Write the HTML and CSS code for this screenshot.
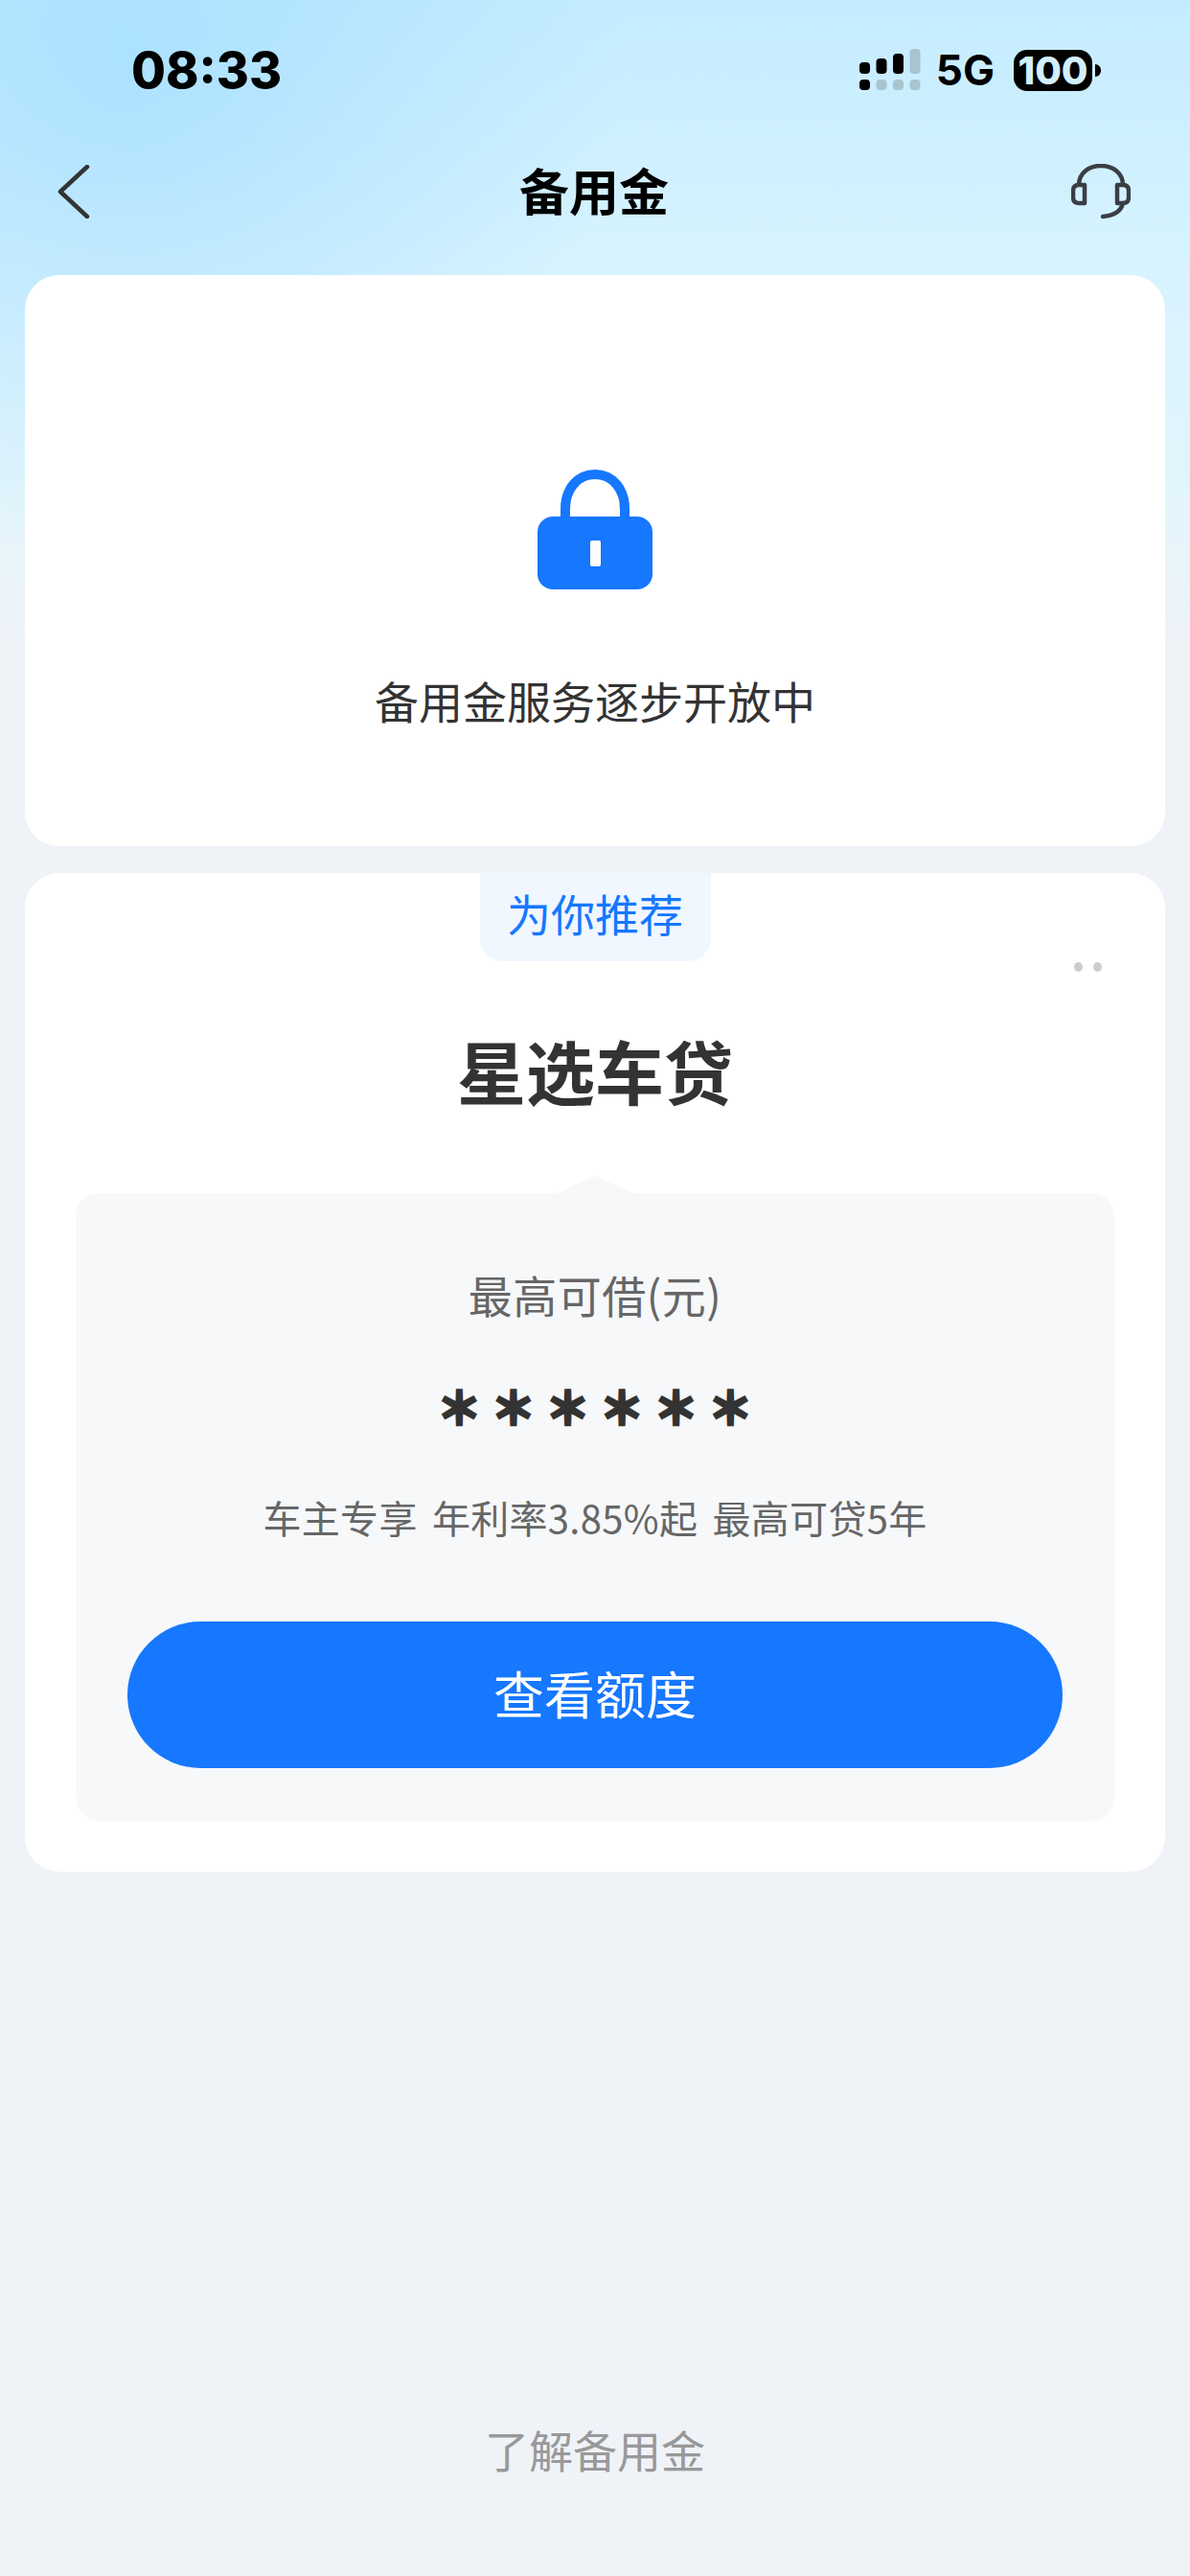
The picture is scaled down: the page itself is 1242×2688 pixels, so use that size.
FILE: index.html
```html
<!DOCTYPE html>
<html lang="zh-CN">

<head>
    <meta charset="UTF-8" />
    <meta name="viewport" content="width=device-width, initial-scale=1.0" />
    <title>备用金</title>
    <link rel="stylesheet" href="styles.css">
</head>

<body>
    <div class="status-bar">
        <span class="time">08:33</span>
        <div class="status-right">
            <svg class="signal" width="64" height="44" viewBox="0 0 64 44">
                <rect x="0" y="14" width="11" height="12" rx="4" fill="#000" />
                <rect x="17.5" y="10" width="11" height="16" rx="4" fill="#000" />
                <rect x="35" y="5" width="11" height="21" rx="4" fill="#000" />
                <rect x="52.5" y="0" width="11" height="26" rx="4" fill="#a9c3cf" />
                <rect x="0" y="32" width="11" height="11" rx="4" fill="#000" />
                <rect x="17.5" y="32" width="11" height="11" rx="4" fill="#a9c3cf" />
                <rect x="35" y="32" width="11" height="11" rx="4" fill="#a9c3cf" />
                <rect x="52.5" y="32" width="11" height="11" rx="4" fill="#a9c3cf" />
            </svg>
            <span class="network">5G</span>
            <div class="battery">
                <span class="battery-level">100</span>
                <span class="battery-nub"></span>
            </div>
        </div>
    </div>

    <div class="nav-bar">
        <div class="nav-side">
            <svg width="34" height="56" viewBox="0 0 34 56">
                <path d="M31 2 L3 28 L31 54" fill="none" stroke="#333" stroke-width="4.5" stroke-linecap="round" stroke-linejoin="round" />
            </svg>
        </div>
        <span class="nav-title">备用金</span>
        <div class="nav-side nav-side-right">
            <svg width="62" height="58" viewBox="0 0 62 58">
                <path d="M8 22 C8 10 18 2 31 2 C44 2 54 10 54 22" fill="none" stroke="#3a3f44" stroke-width="4.5" />
                <path d="M14 22 H8 Q2 22 2 28 V35 Q2 41 8 41 H14 Z" fill="none" stroke="#3a3f44" stroke-width="4.5" stroke-linejoin="round" />
                <path d="M48 22 H54 Q60 22 60 28 V35 Q60 41 54 41 H48 Z" fill="none" stroke="#3a3f44" stroke-width="4.5" stroke-linejoin="round" />
                <path d="M54 41 C52 50 44 54 33 55" fill="none" stroke="#3a3f44" stroke-width="4.5" stroke-linecap="round" />
            </svg>
        </div>
    </div>

    <div class="card card-lock">
        <svg class="lock" width="120" height="125" viewBox="0 0 120 125">
            <path d="M29 55 V41 C29 20 42 5 60 5 C78 5 91 20 91 41 V55" fill="none" stroke="#1677ff" stroke-width="10" />
            <rect x="0" y="49" width="120" height="76" rx="16" fill="#1677ff" />
            <rect x="55" y="74" width="11" height="27" rx="2" fill="#fff" />
        </svg>
        <p class="lock-text">备用金服务逐步开放中</p>
    </div>

    <div class="card card-loan">
        <div class="tag">为你推荐</div>
        <div class="dots"><i></i><i></i></div>
        <h1 class="loan-title">星选车贷</h1>
        <div class="panel">
            <p class="panel-label">最高可借(元)</p>
            <p class="panel-amount">＊＊＊＊＊＊</p>
            <p class="panel-desc">车主专享 年利率3.85%起 最高可贷5年</p>
            <button type="button" class="panel-button">查看额度</button>
        </div>
    </div>

    <div class="footer-link">了解备用金</div>
</body>

</html>
```

FILE: styles.css
```css
* {
    box-sizing: border-box;
}

html,
body {
    margin: 0;
    padding: 0;
}

body {
    width: 1242px;
    height: 2688px;
    display: flex;
    flex-direction: column;
    overflow: hidden;
    font-family: "Noto Sans CJK SC", "Liberation Sans", sans-serif;
    color: #333;
    background-color: #eff3f8;
    background-image:
        radial-gradient(circle at 130px 60px, rgba(160, 220, 255, 0.7), rgba(160, 220, 255, 0) 520px),
        linear-gradient(180deg, #c4ecff 0, #d8f3ff 280px, #e2f5fc 500px, #eff3f8 680px);
}

p,
h1 {
    margin: 0;
}

.status-bar {
    height: 146px;
    display: flex;
    align-items: center;
    justify-content: space-between;
    padding: 0 93px 0 137px;
    color: #000;
}

.time {
    font-family: Inter, "Liberation Sans", sans-serif;
    font-size: 52px;
    font-weight: 800;
}

.status-right {
    display: flex;
    align-items: center;
}

.signal {
    margin-right: 16px;
}

.network {
    font-family: Inter, "Liberation Sans", sans-serif;
    font-size: 44px;
    font-weight: 700;
    margin-right: 20px;
}

.battery {
    display: flex;
    align-items: center;
}

.battery-level {
    width: 82px;
    height: 43px;
    border-radius: 14px;
    background-color: #000;
    color: #d2efff;
    font-family: Inter, "Liberation Sans", sans-serif;
    font-size: 40px;
    font-weight: 800;
    line-height: 43px;
    text-align: center;
}

.battery-nub {
    width: 6px;
    height: 13px;
    margin-left: 3px;
    background-color: #000;
    border-radius: 0 7px 7px 0;
}

.nav-bar {
    height: 108px;
    display: flex;
    align-items: center;
    justify-content: space-between;
    padding: 0 62px 0 60px;
    margin-bottom: 33px;
}

.nav-side {
    width: 100px;
    display: flex;
}

.nav-side-right {
    justify-content: flex-end;
}

.nav-title {
    padding-bottom: 6px;
    font-size: 52px;
    font-weight: 700;
    color: #000;
}

.card {
    margin: 0 26px;
    background-color: #fff;
    border-radius: 36px;
    display: flex;
    flex-direction: column;
    align-items: center;
}

.card-lock {
    height: 596px;
    padding-top: 203px;
}

.lock-text {
    margin-top: 85px;
    font-size: 46px;
    line-height: 60px;
}

.card-loan {
    position: relative;
    height: 1042px;
    margin-top: 28px;
    padding: 0 53px 53px;
}

.tag {
    width: 241px;
    height: 92px;
    background-color: #f0f7ff;
    border-radius: 0 0 24px 24px;
    color: #1677ff;
    font-size: 46px;
    line-height: 82px;
    text-align: center;
}

.dots {
    position: absolute;
    top: 93px;
    right: 66px;
    display: flex;
    gap: 11px;
}

.dots i {
    width: 9px;
    height: 10px;
    border-radius: 50%;
    background-color: #ccc;
}

.loan-title {
    margin-top: 63px;
    font-size: 72px;
    font-weight: 700;
    line-height: 100px;
}

.panel {
    position: relative;
    width: 100%;
    height: 655px;
    margin-top: 79px;
    padding-top: 75px;
    background-color: #f6f8fa;
    border-radius: 24px;
    display: flex;
    flex-direction: column;
    align-items: center;
}

/* little arrow on top of the grey panel */
.panel::before {
    content: "";
    position: absolute;
    top: -18px;
    left: 50%;
    margin-left: -40px;
    border-left: 40px solid transparent;
    border-right: 40px solid transparent;
    border-bottom: 18px solid #f6f8fa;
}

.panel-label {
    font-size: 46px;
    line-height: 60px;
    letter-spacing: 0.5px;
    color: #666;
}

.panel-amount {
    margin-top: 51px;
    padding-left: 10px;
    font-size: 46px;
    font-weight: 700;
    line-height: 70px;
    letter-spacing: 10.6px;
    -webkit-text-stroke: 3.5px #333;
}

.panel-desc {
    margin-top: 57px;
    font-size: 40px;
    line-height: 50px;
    letter-spacing: 0.3px;
    word-spacing: 6px;
    color: #666;
}

.panel-button {
    width: 976px;
    height: 153px;
    margin-top: 84px;
    padding: 0 0 6px;
    border: none;
    border-radius: 77px;
    background-color: #1677ff;
    color: #fff;
    font-family: inherit;
    font-size: 53px;
}

.footer-link {
    margin-top: auto;
    padding-bottom: 103px;
    font-size: 46px;
    line-height: 60px;
    color: #999;
    text-align: center;
}
```
